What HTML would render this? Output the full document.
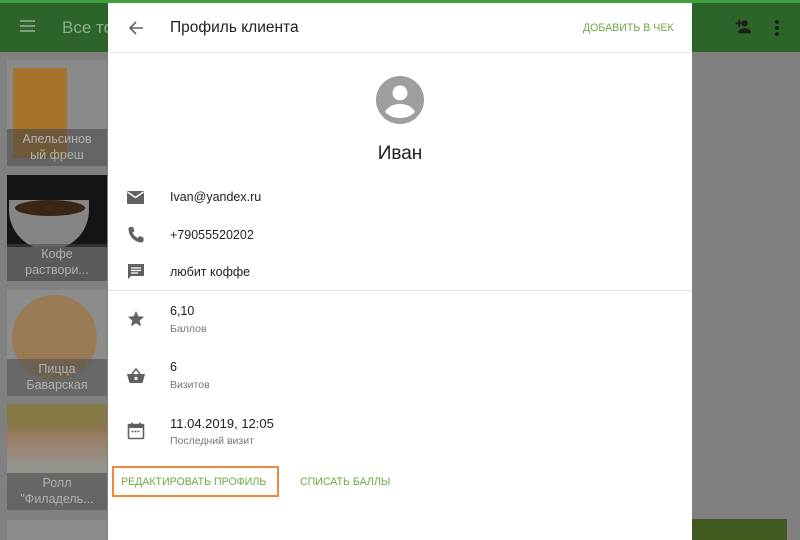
<!DOCTYPE html>
<html><head><meta charset="utf-8"><style>
*{margin:0;padding:0;box-sizing:border-box}
body{width:800px;height:540px;overflow:hidden;background:#808080;font-family:"Liberation Sans",Roboto,sans-serif;position:relative}
.top{position:absolute;left:0;top:0;width:800px;height:3px;background:#43a03f}
.bar{position:absolute;left:0;top:3px;width:800px;height:49px;background:#2c6429}
.tile{position:absolute;left:7px;width:100px;height:106px;overflow:hidden}
.cap{position:absolute;left:0;bottom:0;width:100%;background:rgba(70,70,70,.55);color:#b0b0b0;font-size:12.5px;text-align:center;line-height:16px;padding:2px 0}
.dlg{position:absolute;left:108px;top:3px;width:584px;height:537px;background:#fff}
.hd{height:50px;border-bottom:1px solid #ececec;position:relative}
.t{position:absolute;font-size:16px;color:#212121}
.g{color:#6fa843;font-size:10.6px;position:absolute}
.ic{position:absolute;left:18px;width:20px;height:20px}
.s{position:absolute;left:62px;font-size:12.5px;color:#212121}
.sub{position:absolute;left:62px;font-size:10.5px;color:#757575}
</style></head><body>
<div class="top"></div>
<div class="bar">
<div style="position:absolute;left:20px;top:17px;width:15px;height:2px;background:#7f9e7d;box-shadow:0 5px 0 #7f9e7d,0 10px 0 #7f9e7d"></div>
<div style="position:absolute;left:62px;top:15px;color:#8fae8d;font-size:17px">Все то</div>
<svg style="position:absolute;left:730px;top:14px" width="22" height="18" viewBox="0 0 24 20"><path d="M9 3v3H6v2h3v3h2V8h3V6h-3V3z" fill="#1e1e1e"/><circle cx="16" cy="7" r="3.5" fill="#1e1e1e"/><path d="M9 17c0-3 4-4.5 7-4.5s7 1.5 7 4.5v1H9z" fill="#1e1e1e"/></svg>
<div style="position:absolute;left:775px;top:17px;width:4px;height:4px;border-radius:2px;background:#1e1e1e;box-shadow:0 6px 0 #1e1e1e,0 12px 0 #1e1e1e"></div>
</div>
<div class="tile" style="top:60px;background:#8a8a8a;">
<div style="position:absolute;left:6px;top:8px;width:54px;height:90px;background:#a5722c"></div>
<div class="cap" style="top:69px">Апельсинов<br>ый фреш</div></div>
<div class="tile" style="top:175px;background:#141414">
<div style="position:absolute;left:2px;top:25px;width:80px;height:50px;border-radius:0 0 40px 40px;background:#858585"></div>
<div style="position:absolute;left:8px;top:25px;width:70px;height:16px;border-radius:50%;background:#3a2616"></div>
<div style="position:absolute;left:0;top:72px;width:100px;height:34px;background:#747474"></div>
<div class="cap" style="top:69px">Кофе<br>раствори...</div></div>
<div class="tile" style="top:290px;background:#8c8c8c">
<div style="position:absolute;left:5px;top:5px;width:85px;height:85px;border-radius:50%;background:#9a7a55"></div>
<div class="cap" style="top:69px;background:rgba(80,80,80,.6)">Пицца<br>Баварская</div></div>
<div class="tile" style="top:404px;background:linear-gradient(#857a45 0,#857a45 20%,#9a7a62 30%,#959590 60%,#8a8a8a)">
<div class="cap" style="top:69px">Ролл<br>"Филадель...</div></div>
<div class="tile" style="top:520px;height:20px;background:#8c8c8c"></div>
<div style="position:absolute;left:692px;top:519px;width:95px;height:21px;background:#40591f"></div>
<div class="dlg">
<div class="hd">
<svg style="position:absolute;left:20px;top:17px" width="16" height="16" viewBox="0 0 16 16"><path d="M15 8H2M8 2L2 8l6 6" stroke="#616161" stroke-width="1.6" fill="none"/></svg>
<div class="t" style="left:62px;top:16px;font-size:15.5px">Профиль клиента</div>
<div class="g" style="left:475px;top:19px">ДОБАВИТЬ В ЧЕК</div>
</div>
<svg style="position:absolute;left:268px;top:73px" width="48" height="48" viewBox="0 0 48 48"><circle cx="24" cy="24" r="24" fill="#9e9e9e"/><circle cx="24" cy="17" r="7.5" fill="#fff"/><path d="M9 36c3-6 9-8 15-8s12 2 15 8c-4 4-9 6-15 6s-11-2-15-6z" fill="#fff"/></svg>
<div class="t" style="left:0;width:584px;text-align:center;top:140px;font-size:19px">Иван</div>
<svg class="ic" style="top:185px" viewBox="0 0 20 20"><rect x="1" y="3" width="17" height="13" rx="1" fill="#616161"/><path d="M1.5 4l8 5.5 8-5.5" stroke="#fff" stroke-width="1.5" fill="none"/></svg>
<div class="s" style="top:187px">Ivan@yandex.ru</div>
<svg class="ic" style="top:222px" viewBox="0 0 20 20"><path d="M4 2l3 0 1.5 4-2 1.5c1 2.5 3 4.5 5.5 5.5l1.5-2 4 1.5v3c0 1-1 2-2 2C9 17.5 2.5 11 2.5 4c0-1 .5-2 1.5-2z" fill="#616161"/></svg>
<div class="s" style="top:225px">+79055520202</div>
<svg class="ic" style="top:259px" viewBox="0 0 20 20"><path d="M2 2h16v12H5l-3 3z" fill="#616161"/><path d="M5 6h10M5 8.5h10M5 11h7" stroke="#fff" stroke-width="1.3"/></svg>
<div class="s" style="top:262px">любит коффе</div>
<div style="position:absolute;left:0;top:287px;width:584px;height:1px;background:#e0e0e0"></div>
<svg class="ic" style="top:306px" viewBox="0 0 20 20"><path d="M10 2l2.3 5.3 5.7.5-4.3 3.8 1.3 5.6L10 14.2 5 17.2l1.3-5.6L2 7.8l5.7-.5z" fill="#616161"/></svg>
<div class="s" style="top:301px">6,10</div><div class="sub" style="top:320px">Баллов</div>
<svg class="ic" style="top:363px" viewBox="0 0 20 20"><path d="M6 8l4-5 4 5" stroke="#616161" stroke-width="1.5" fill="none"/><path d="M1 8h18l-2.5 9h-13z" fill="#616161"/><circle cx="10" cy="12.5" r="1.6" fill="#fff"/></svg>
<div class="s" style="top:357px">6</div><div class="sub" style="top:376px">Визитов</div>
<svg class="ic" style="top:418px" viewBox="0 0 20 20"><rect x="2.5" y="3.5" width="15" height="14" rx="1" stroke="#616161" stroke-width="1.6" fill="none"/><rect x="2.5" y="3.5" width="15" height="3.5" fill="#616161"/><path d="M6 1.5v3M14 1.5v3" stroke="#616161" stroke-width="1.6"/><path d="M5.5 10.5h9" stroke="#616161" stroke-width="1.6" stroke-dasharray="2 1"/></svg>
<div class="s" style="top:413px;font-size:13px">11.04.2019, 12:05</div><div class="sub" style="top:432px">Последний визит</div>
<div style="position:absolute;left:4px;top:463px;width:167px;height:31px;border:2px solid #f08a3a"></div>
<div class="g" style="left:13px;top:473px">РЕДАКТИРОВАТЬ ПРОФИЛЬ</div>
<div class="g" style="left:192px;top:473px">СПИСАТЬ БАЛЛЫ</div>
</div>
</body></html>
